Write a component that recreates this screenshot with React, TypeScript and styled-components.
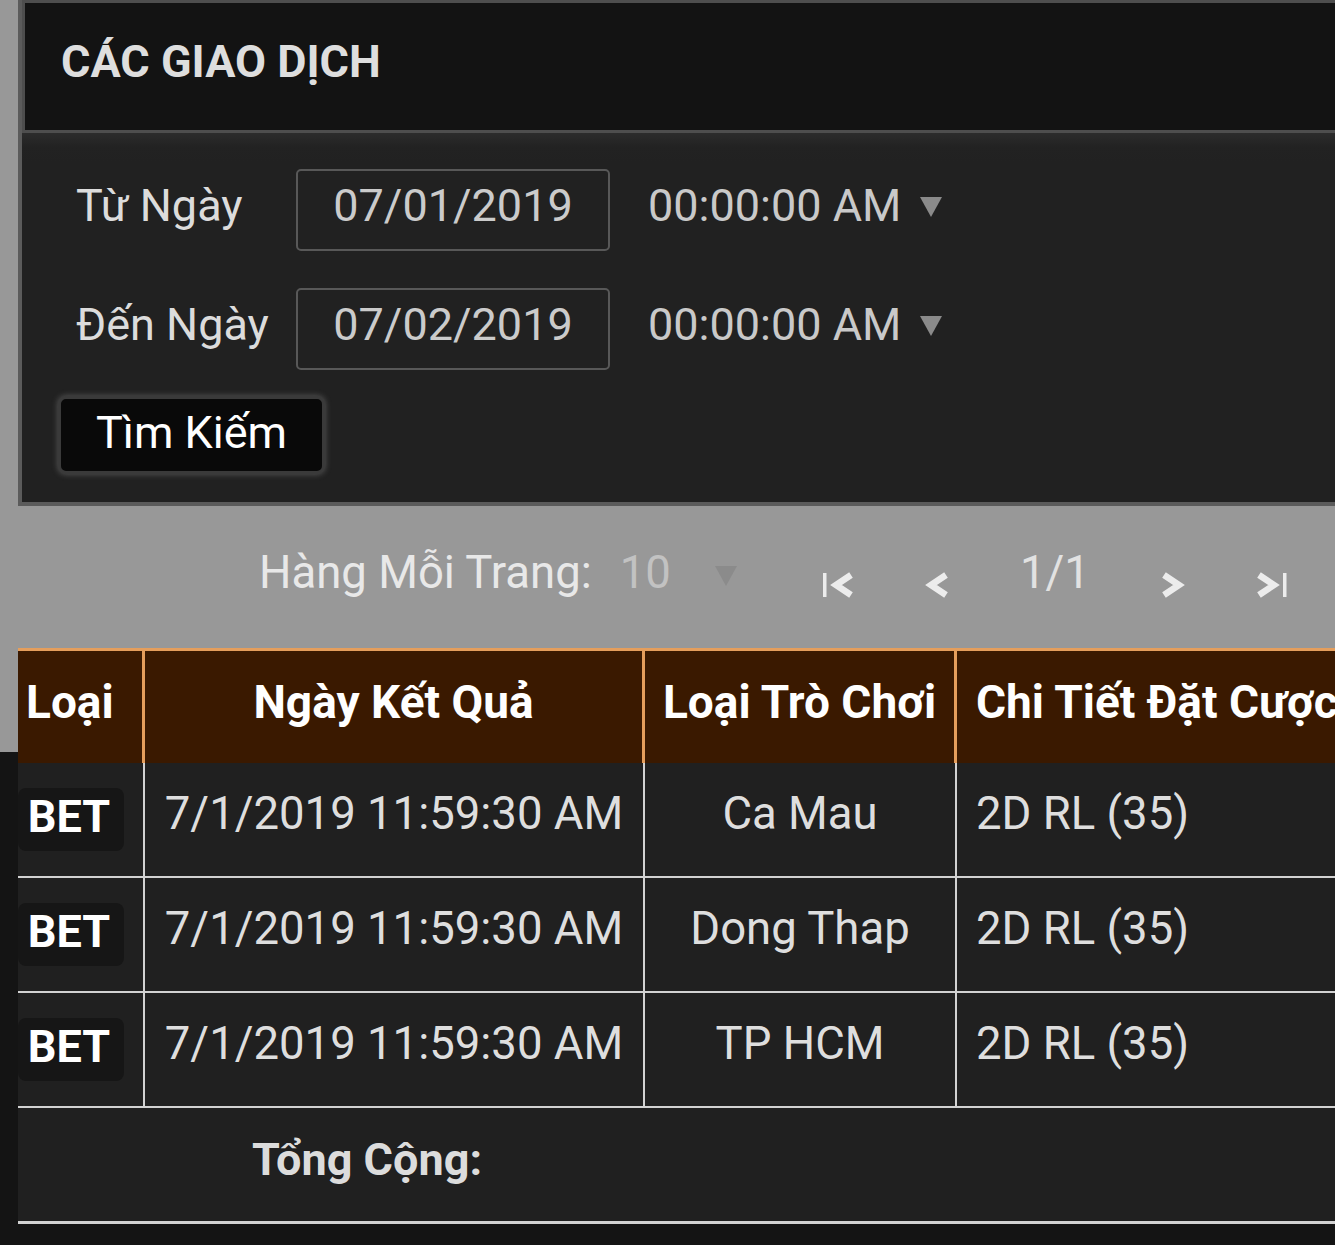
import { createGlobalStyle, styled } from "styled-components";

const GlobalStyle = createGlobalStyle`
  html, body {
    margin: 0;
    padding: 0;
    background: #141414;
    overflow: hidden;
  }
  * {
    box-sizing: border-box;
  }
`;

const rows = [
  { type: "BET", date: "7/1/2019 11:59:30 AM", game: "Ca Mau", detail: "2D RL (35)" },
  { type: "BET", date: "7/1/2019 11:59:30 AM", game: "Dong Thap", detail: "2D RL (35)" },
  { type: "BET", date: "7/1/2019 11:59:30 AM", game: "TP HCM", detail: "2D RL (35)" },
];

function Chevron({ dir, bar }: { dir: "left" | "right"; bar?: boolean }) {
  const pts = dir === "left" ? "28,4 13,14 28,24" : "4,4 19,14 4,24";
  return (
    <svg width="32" height="28" viewBox="0 0 32 28">
      {bar && <rect x={dir === "left" ? 0 : 28} y="2" width="3.5" height="24" fill="#ececec" />}
      <polyline points={pts} fill="none" stroke="#ececec" strokeWidth="6.5" strokeLinejoin="miter" />
    </svg>
  );
}

function Caret({ color }: { color: string }) {
  return (
    <svg width="22" height="20" viewBox="0 0 22 20">
      <polygon points="0,0 22,0 11,20" fill={color} />
    </svg>
  );
}

export default function App() {
  return (
    <Page>
      <GlobalStyle />
      <Panel>
        <TitleBar>CÁC GIAO DỊCH</TitleBar>
        <FormBody>
          <FieldGrid>
            <Label>Từ Ngày</Label>
            <DateInput readOnly value="07/01/2019" />
            <TimeSelect>
              00:00:00 AM
              <Caret color="#8a8a8a" />
            </TimeSelect>
            <Label>Đến Ngày</Label>
            <DateInput readOnly value="07/02/2019" />
            <TimeSelect>
              00:00:00 AM
              <Caret color="#8a8a8a" />
            </TimeSelect>
          </FieldGrid>
          <SearchButton>Tìm Kiếm</SearchButton>
        </FormBody>
      </Panel>

      <Pager>
        <PagerLabel>Hàng Mỗi Trang:</PagerLabel>
        <PageSize>10</PageSize>
        <SizeCaret>
          <Caret color="#8b8b8b" />
        </SizeCaret>
        <NavGroup>
          <NavButton>
            <Chevron dir="left" bar />
          </NavButton>
          <NavButton>
            <Chevron dir="left" />
          </NavButton>
          <PageText>1/1</PageText>
          <NavButton>
            <Chevron dir="right" />
          </NavButton>
          <NavButton>
            <Chevron dir="right" bar />
          </NavButton>
        </NavGroup>
      </Pager>

      <TableWrap>
        <Table>
          <thead>
            <tr>
              <Th $w={127} $align="left">Loại</Th>
              <Th $w={500}>Ngày Kết Quả</Th>
              <Th $w={312}>Loại Trò Chơi</Th>
              <Th $align="left" $pad={19}>Chi Tiết Đặt Cược</Th>
            </tr>
          </thead>
          <tbody>
            {rows.map((r, i) => (
              <tr key={i}>
                <TypeCell>
                  <Badge>{r.type}</Badge>
                </TypeCell>
                <Td>{r.date}</Td>
                <Td>{r.game}</Td>
                <Td $align="left" $pad={19}>
                  {r.detail}
                </Td>
              </tr>
            ))}
            <tr>
              <TotalCell colSpan={4}>Tổng Cộng:</TotalCell>
            </tr>
          </tbody>
        </Table>
      </TableWrap>
    </Page>
  );
}

const Page = styled.div`
  width: 1335px;
  min-height: 1245px;
  overflow: hidden;
  font-family: Roboto, "Noto Sans", sans-serif;
  background: linear-gradient(to bottom, #989898 0, #989898 752px, #141414 752px);
`;

const Panel = styled.section`
  margin-left: 18px;
  width: 1340px;
  border-left: 4px solid #5b5b5b;
  border-bottom: 4px solid #5b5b5b;
  background: #212121;
`;

const TitleBar = styled.h1`
  margin: 0;
  height: 133px;
  display: flex;
  align-items: center;
  padding: 0 0 10px 36px;
  background: #131313;
  border: 3px solid #4e4e4e;
  border-right: none;
  color: #dedede;
  font-size: 45px;
  font-weight: 700;
`;

const FormBody = styled.div`
  padding: 36px 0 28px 36px;
  background: linear-gradient(to bottom, #2c2c2c 0, #222 14px, #212121 30px);
`;

const FieldGrid = styled.div`
  display: grid;
  grid-template-columns: 220px 314px auto;
  row-gap: 37px;
  align-items: center;
  padding-left: 18px;
  margin-bottom: 26px;
`;

const Label = styled.label`
  color: #dcdcdc;
  font-size: 45px;
  line-height: 1;
  padding-bottom: 10px;
`;

const DateInput = styled.input`
  width: 314px;
  height: 82px;
  border: 2px solid #585858;
  border-radius: 5px;
  background: transparent;
  color: #cbcbcb;
  font-family: Roboto, sans-serif;
  font-size: 45px;
  text-align: center;
  padding: 0 0 9px;
  outline: none;
`;

const TimeSelect = styled.div`
  display: flex;
  align-items: center;
  gap: 19px;
  margin-left: 38px;
  color: #c9c9c9;
  font-size: 45px;
  padding-bottom: 10px;

  svg {
    margin-top: 4px;
  }
`;

const SearchButton = styled.button`
  width: 267px;
  height: 78px;
  background: #090909;
  border: 3px solid #3a3a3a;
  border-radius: 8px;
  box-shadow: 0 0 6px rgba(200, 200, 200, 0.35);
  color: #ffffff;
  font-family: Roboto, sans-serif;
  font-size: 45px;
  padding: 0 0 6px;
  cursor: pointer;
`;

const Pager = styled.div`
  height: 142px;
  display: flex;
  align-items: center;
  padding: 0 0 10px 259px;
  color: #e6e6e6;
  font-size: 45.5px;
`;

const PagerLabel = styled.span`
  color: #e8e8e8;
`;

const PageSize = styled.span`
  margin-left: 28px;
  color: #c2c2c2;
`;

const SizeCaret = styled.span`
  display: flex;
  margin-left: 44px;
  margin-top: 8px;
`;

const NavGroup = styled.div`
  display: flex;
  align-items: center;
  gap: 55px;
  margin-left: 82px;
`;

const NavButton = styled.span`
  width: 40px;
  display: flex;
  justify-content: center;
  margin-top: 26px;
`;

const PageText = styled.span`
  width: 92px;
  text-align: center;
  color: #e2e2e2;
`;

const TableWrap = styled.div`
  margin-left: 18px;
  width: 1317px;
  overflow: hidden;
`;

const Table = styled.table`
  width: 1400px;
  table-layout: fixed;
  border-collapse: separate;
  border-spacing: 0;
  font-family: Roboto, sans-serif;
`;

const Th = styled.th<{ $w?: number; $align?: string; $pad?: number }>`
  width: ${({ $w }) => ($w ? `${$w}px` : "auto")};
  height: 115px;
  padding: 0 0 10px ${({ $pad, $align }) => ($pad ? $pad : $align === "left" ? 8 : 0)}px;
  text-align: ${({ $align }) => $align || "center"};
  background: #3a1900;
  border-top: 3px solid #e59e5c;
  border-right: 3px solid #e59e5c;
  color: #ffffff;
  font-size: 46px;
  font-weight: 700;
  white-space: nowrap;
`;

const Td = styled.td<{ $align?: string; $pad?: number }>`
  height: 115px;
  padding: 0 0 12px ${({ $pad }) => $pad || 0}px;
  text-align: ${({ $align }) => $align || "center"};
  background: #202020;
  border-right: 2px solid #d2d2d2;
  border-bottom: 2px solid #d2d2d2;
  color: #dedede;
  font-size: 45.5px;
  white-space: nowrap;
`;

const TypeCell = styled.td`
  height: 115px;
  padding: 0;
  background: #202020;
  border-right: 2px solid #d2d2d2;
  border-bottom: 2px solid #d2d2d2;
`;

const Badge = styled.div`
  width: 106px;
  height: 63px;
  display: flex;
  align-items: center;
  justify-content: center;
  padding: 0 4px 6px 0;
  background: #161616;
  border-radius: 8px;
  color: #ffffff;
  font-size: 45px;
  font-weight: 700;
`;

const TotalCell = styled.td`
  height: 116px;
  padding: 0 0 10px 234px;
  background: #202020;
  border-bottom: 3px solid #d2d2d2;
  color: #dcdcdc;
  font-size: 45px;
  font-weight: 700;
`;
